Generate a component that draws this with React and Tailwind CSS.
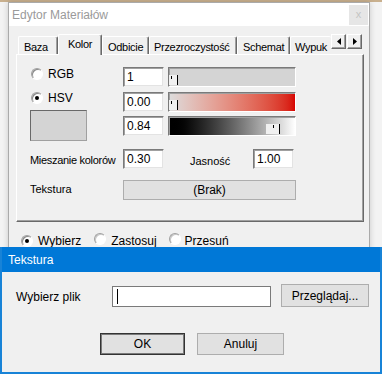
import React from 'react';

const font = { fontFamily: '"Liberation Sans", Arial, sans-serif' };

const Radio = ({ checked, faded }) => (
  <span
    className={`relative inline-block w-[12px] h-[12px] rounded-full bg-white border border-t-[#a0a0a0] border-l-[#a0a0a0] border-b-[#ffffff] border-r-[#ffffff] ${faded ? 'shadow-[inset_1px_1px_0_#c8c8c8]' : 'shadow-[inset_1px_1px_0_#8a8a8a]'}`}
  >
    {checked && <span className="absolute left-[3px] top-[3px] w-[4px] h-[4px] rounded-full bg-black" />}
  </span>
);

const Field = ({ value, className = '' }) => (
  <div
    className={`h-[20px] bg-white border border-t-[#7a7a7a] border-l-[#7a7a7a] border-b-[#f0f0f0] border-r-[#f0f0f0] shadow-[inset_1px_1px_0_#a0a0a0,inset_-1px_-1px_0_#e3e3e3] pl-[3px] pt-[1px] text-[12px] leading-[16px] text-black ${className}`}
  >
    {value}
  </div>
);

const Thumb = ({ left, width, tick }) => (
  <div
    className="absolute bottom-[1px] h-[10px] bg-[#f0f0f0] border-r border-black"
    style={{ left, width }}
  >
    <div className="absolute top-[1px] w-[1px] h-[3px] bg-black" style={{ left: tick }} />
  </div>
);

const Slider = ({ bg, thumb }) => (
  <div className="relative w-[128px] h-[20px] border border-t-[#7a7a7a] border-l-[#7a7a7a] border-b-[#ffffff] border-r-[#ffffff] overflow-hidden">
    <div className={`absolute inset-0 ${bg} shadow-[inset_1px_1px_0_#a0a0a0]`} />
    <Thumb {...thumb} />
  </div>
);

const Tab = ({ label, selected, className = '' }) =>
  selected ? (
    <div className={`relative z-10 h-[21px] -mb-[1px] bg-[#f0f0f0] border-t border-l border-white border-r border-r-[#696969] shadow-[inset_-1px_0_0_#a0a0a0] rounded-t-[2px] flex justify-center pt-[3px] text-[11px] leading-[13px] tracking-[-0.3px] ${className}`}>
      {label}
    </div>
  ) : (
    <div className={`h-[18px] mt-[2px] bg-[#f0f0f0] border-t border-l border-white border-r border-r-[#696969] shadow-[inset_-1px_0_0_#a0a0a0] rounded-t-[2px] flex pt-[4px] text-[11px] leading-[13px] tracking-[-0.3px] overflow-hidden whitespace-nowrap ${className}`}>
      {label}
    </div>
  );

const ArrowBtn = ({ dir }) => (
  <div className="w-[15px] h-[15px] bg-[#f0f0f0] border border-t-white border-l-white border-b-[#696969] border-r-[#696969] shadow-[inset_-1px_-1px_0_#a0a0a0] flex items-center justify-center">
    <svg width="4" height="7" viewBox="0 0 4 7">
      {dir === 'left' ? <path d="M4 0 L0 3.5 L4 7 Z" fill="#000" /> : <path d="M0 0 L4 3.5 L0 7 Z" fill="#000" />}
    </svg>
  </div>
);

const Button = ({ children, className = '', primary }) => (
  <div
    className={`flex items-center justify-center bg-[#e1e1e1] border ${primary ? 'border-[#333333] shadow-[inset_0_0_0_1px_#7a7a7a]' : 'border-[#adadad]'} text-[12px] text-black ${className}`}
  >
    {children}
  </div>
);

export default function App() {
  return (
    <div className="relative w-[382px] h-[374px] overflow-hidden bg-[#f3f3f3] text-black" style={font}>
      {/* desktop strip */}
      <div className="h-[2px] bg-[#c9b08e]" />

      {/* main window */}
      <div className="absolute left-[8px] top-[2px] w-[362px] h-[330px] bg-[#f0f0f0] border border-[#aaaaaa] shadow-[0_0_6px_rgba(0,0,0,0.18)]">
        <div className="h-[23px] bg-white flex items-center justify-between pl-[3px] pr-[1px]">
          <span className="text-[12px] text-[#9a9a9a]">Edytor Materiałów</span>
          <div className="w-[19px] h-[20px] bg-[#e6e6e6] flex items-center justify-center text-[11px] text-[#c4c4c4]">x</div>
        </div>

        <div className="pl-[7px] pt-[8px]">
          {/* tabs header */}
          <div className="flex items-start w-[348px] h-[20px]">
            <Tab label="Baza" className="ml-[2px] w-[40px] pl-[5px]" />
            <Tab label="Kolor" selected className="w-[44px]" />
            <Tab label="Odbicie" className="w-[47px] pl-[5px]" />
            <Tab label="Przezroczystość" className="w-[88px] pl-[4px]" />
            <Tab label="Schemat" className="w-[53px] pl-[5px]" />
            <Tab label="Wypuk" className="w-[41px] pl-[4px] border-r-0 shadow-none" />
            <ArrowBtn dir="left" />
            <div className="w-[1px]" />
            <ArrowBtn dir="right" />
          </div>

          {/* tab panel */}
          <div className="w-[348px] h-[168px] border border-t-white border-l-white border-b-[#696969] border-r-[#696969] shadow-[inset_-1px_-1px_0_#a0a0a0] text-[11px]">
            <div className="pt-[12px] flex">
              <div className="w-[106px] pl-[13px] flex flex-col">
                <div className="flex items-center h-[14px] gap-[5px] ml-[1px]">
                  <Radio />
                  <span className="text-[12px]">RGB</span>
                </div>
                <div className="flex items-center h-[14px] gap-[5px] ml-[1px] mt-[10px]">
                  <Radio checked />
                  <span className="text-[12px]">HSV</span>
                </div>
                <div className="mt-[5px] w-[57px] h-[31px] bg-[#d4d4d4] border border-t-[#696969] border-l-[#696969] border-b-[#a0a0a0] border-r-[#a0a0a0]" />
              </div>
              <div className="flex flex-col gap-[4px]">
                <div className="flex gap-[4px]">
                  <Field value="1" className="w-[41px]" />
                  <Slider bg="bg-[#d4d4d4]" thumb={{ left: 0, width: 9, tick: 2 }} />
                </div>
                <div className="flex gap-[4px] mt-[1px]">
                  <Field value="0.00" className="w-[41px]" />
                  <Slider bg="bg-gradient-to-r from-[#dcdcdc] to-[#d70000]" thumb={{ left: 0, width: 9, tick: 2 }} />
                </div>
                <div className="flex gap-[4px]">
                  <Field value="0.84" className="w-[41px]" />
                  <Slider bg="bg-gradient-to-r from-black to-white" thumb={{ left: 97, width: 14, tick: 7 }} />
                </div>
              </div>
            </div>

            <div className="flex items-center mt-[8px] pl-[13px]">
              <span className="w-[93px] pt-[2px] tracking-[-0.3px] whitespace-nowrap">Mieszanie kolorów</span>
              <Field value="0.30" className="w-[41px]" />
              <span className="ml-[26px] w-[63px] pt-[4px]">Jasność</span>
              <Field value="1.00" className="w-[41px]" />
            </div>

            <div className="flex items-center mt-[10px] pl-[13px]">
              <span className="w-[93px]">Tekstura</span>
              <Button className="w-[173px] h-[20px] text-[11px]">(Brak)</Button>
            </div>
          </div>

          {/* mode radios */}
          <div className="flex items-center h-[14px] mt-[12px] pl-[5px] text-[12px]">
            <Radio checked />
            <span className="ml-[5px]">Wybierz</span>
            <span className="ml-[13px]"><Radio faded /></span>
            <span className="ml-[5px]">Zastosuj</span>
            <span className="ml-[12px]"><Radio faded /></span>
            <span className="ml-[4px]">Przesuń</span>
          </div>
        </div>
      </div>

      {/* Tekstura dialog */}
      <div className="absolute left-0 top-[247px] w-[382px] h-[127px] bg-[#f0f0f0] border-l-[2px] border-r-[2px] border-b-[2px] border-[#1883d7]">
        <div className="h-[25px] bg-[#0078d7] flex items-center pl-[6px] text-[12px] text-white">Tekstura</div>
        <div className="flex items-center mt-[12px] pl-[14px]">
          <span className="w-[96px] text-[12px] pt-[3px]">Wybierz plik</span>
          <div className="w-[159px] h-[21px] mt-[2px] bg-white border border-[#7a7a7a] flex items-center pl-[4px]">
            <div className="w-[1px] h-[15px] bg-black" />
          </div>
          <Button className="ml-[10px] w-[88px] h-[23px]">Przeglądaj...</Button>
        </div>
        <div className="flex mt-[26px] pl-[98px] gap-[12px]">
          <Button primary className="w-[85px] h-[22px]">OK</Button>
          <Button className="w-[87px] h-[22px]">Anuluj</Button>
        </div>
      </div>
    </div>
  );
}
